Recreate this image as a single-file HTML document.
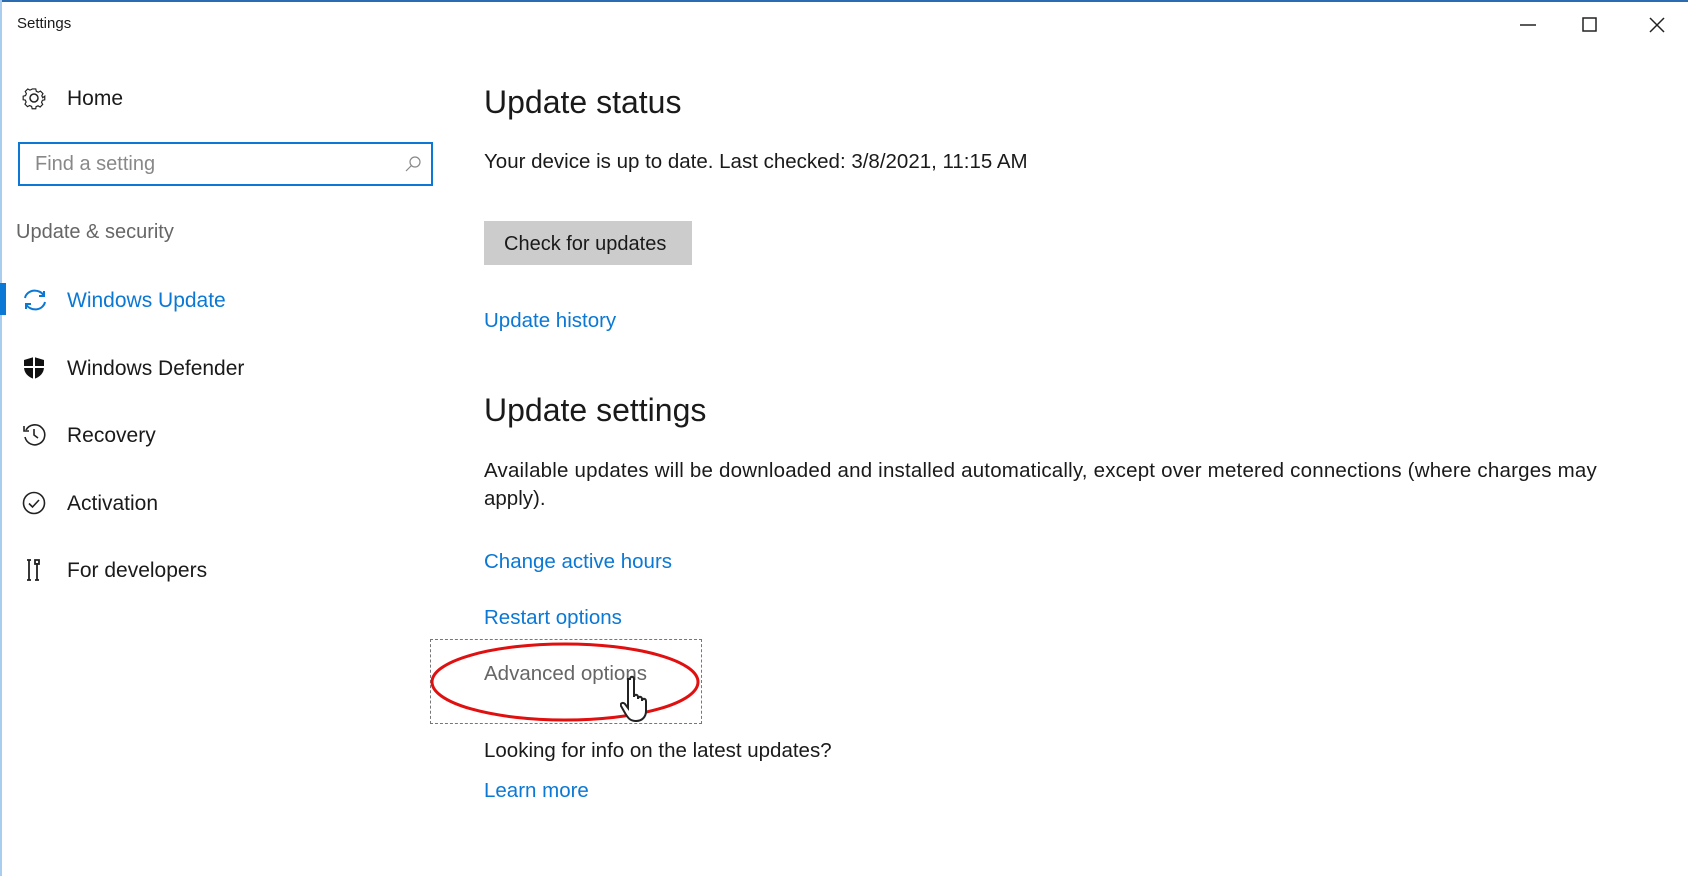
<!DOCTYPE html>
<html><head><meta charset="utf-8"><style>
*{margin:0;padding:0;box-sizing:border-box}
body{width:1688px;height:876px;background:#fff;font-family:"Liberation Sans",sans-serif;color:#1a1a1a;position:relative;overflow:hidden}
.a{position:absolute;white-space:nowrap;line-height:1}
.blue{color:#0a78d4}
.nav{font-size:21px;left:67px}
.ic{position:absolute;left:22px}
.r{left:484px;font-size:20.5px}
.h{font-size:32px;left:484px}
</style></head><body>
<div style="position:absolute;left:0;top:0;width:1688px;height:2px;background:#2b6cb0"></div>
<div style="position:absolute;left:0;top:0;width:2px;height:876px;background:#a9cdef"></div>
<div class="a" style="left:17px;top:16px;font-size:15px">Settings</div>
<svg style="position:absolute;left:1520px;top:15px" width="150" height="20" viewBox="0 0 150 20">
<line x1="0" y1="10" x2="16" y2="10" stroke="#222" stroke-width="1.5"/>
<rect x="63" y="3" width="13" height="13" fill="none" stroke="#222" stroke-width="1.5"/>
<path d="M130 3l14 14M144 3l-14 14" stroke="#222" stroke-width="1.5"/>
</svg>
<svg class="ic" style="top:86px" width="24" height="24" viewBox="0 0 24 24"><circle cx="12" cy="12" r="4" fill="none" stroke="#222" stroke-width="1.5"/><path d="M10 2h4l.6 2.6 2.2 1 2.4-1.3 2.8 2.8-1.3 2.4 1 2.2L24 10v4l-2.6.6-1 2.2 1.3 2.4-2.8 2.8-2.4-1.3-2.2 1L14 24h-4l-.6-2.6-2.2-1-2.4 1.3-2.8-2.8 1.3-2.4-1-2.2L0 14v-4l2.6-.6 1-2.2L2.3 4.8l2.8-2.8 2.4 1.3 2.2-1z" fill="none" stroke="#222" stroke-width="1.3" transform="scale(.9) translate(1.3 1.3)"/></svg>
<div class="a nav" style="top:88px">Home</div>
<div style="position:absolute;left:18px;top:142px;width:415px;height:44px;border:2px solid #0a78d4"></div>
<div class="a" style="left:35px;top:154px;font-size:20px;color:#888">Find a setting</div>
<svg style="position:absolute;left:404px;top:155px" width="18" height="18" viewBox="0 0 18 18"><circle cx="11" cy="7" r="5" fill="none" stroke="#888" stroke-width="1.2"/><line x1="7.5" y1="10.5" x2="2" y2="16" stroke="#888" stroke-width="1.2"/></svg>
<div class="a" style="left:16px;top:222px;font-size:20px;color:#666">Update &amp; security</div>
<div style="position:absolute;left:0;top:283px;width:6px;height:32px;background:#0a78d4"></div>
<svg class="ic" style="top:288px" width="26" height="24" viewBox="0 0 26 24"><path d="M3 10A10 9 0 0 1 22 8M23 14A10 9 0 0 1 4 16" fill="none" stroke="#0a78d4" stroke-width="2"/><path d="M22 3v5h-5M4 21v-5h5" fill="none" stroke="#0a78d4" stroke-width="2"/></svg>
<div class="a nav blue" style="top:290px">Windows Update</div>
<svg class="ic" style="top:356px" width="24" height="24" viewBox="0 0 24 24"><path d="M12 1L2 4v7c0 6 4 10 10 12 6-2 10-6 10-12V4z" fill="#111"/><path d="M12 1v22M2 11h20" stroke="#fff" stroke-width="2"/></svg>
<div class="a nav" style="top:358px">Windows Defender</div>
<svg class="ic" style="top:423px" width="24" height="24" viewBox="0 0 24 24"><path d="M4 7A10 10 0 1 1 3 14" fill="none" stroke="#222" stroke-width="1.6"/><path d="M2 3v5h5" fill="none" stroke="#222" stroke-width="1.6"/><path d="M12 6v6l4 3" fill="none" stroke="#222" stroke-width="1.6"/></svg>
<div class="a nav" style="top:425px">Recovery</div>
<svg class="ic" style="top:491px" width="24" height="24" viewBox="0 0 24 24"><circle cx="12" cy="12" r="10.5" fill="none" stroke="#222" stroke-width="1.6"/><path d="M7 12.5l3.5 3.5L17 9" fill="none" stroke="#222" stroke-width="1.6"/></svg>
<div class="a nav" style="top:493px">Activation</div>
<svg class="ic" style="top:558px" width="24" height="24" viewBox="0 0 24 24"><path d="M7 2v20M5 2h4M5 22h4M15 5v17M13 22h4M13 2h4v4h-4z" fill="none" stroke="#222" stroke-width="1.8"/></svg>
<div class="a nav" style="top:560px">For developers</div>

<div class="a h" style="top:86px">Update status</div>
<div class="a r" style="top:152px">Your device is up to date. Last checked: 3/8/2021, 11:15 AM</div>
<div style="position:absolute;left:484px;top:221px;width:208px;height:44px;background:#cccccc"></div>
<div class="a" style="left:504px;top:234px;font-size:20px">Check for updates</div>
<div class="a r blue" style="top:311px">Update history</div>
<div class="a h" style="top:394px">Update settings</div>
<div class="a r" style="top:461px;letter-spacing:0.2px">Available updates will be downloaded and installed automatically, except over metered connections (where charges may</div>
<div class="a r" style="top:489px">apply).</div>
<div class="a r blue" style="top:552px">Change active hours</div>
<div class="a r blue" style="top:608px">Restart options</div>
<div style="position:absolute;left:430px;top:639px;width:272px;height:85px;border:1px dashed #777"></div>
<div class="a r" style="top:664px;color:#666">Advanced options</div>
<svg style="position:absolute;left:428px;top:640px" width="280" height="86" viewBox="0 0 280 86"><ellipse cx="137" cy="42" rx="133" ry="38" fill="none" stroke="#e01010" stroke-width="3"/></svg>
<svg style="position:absolute;left:620px;top:675px" width="40" height="50" viewBox="0 0 40 50"><path d="M10 4c0-3 4-3 4 0v18c0-3 4-3 4 0v2c0-3 4-3 4 0v2c0-3 4-3 4 0v10c0 6-4 10-10 10s-8-3-11-8l-4-7c-1-3 2-4 4-2l3 4V4z" fill="#fff" stroke="#222" stroke-width="2"/></svg>
<div class="a r" style="top:741px">Looking for info on the latest updates?</div>
<div class="a r blue" style="top:781px">Learn more</div>
</body></html>
